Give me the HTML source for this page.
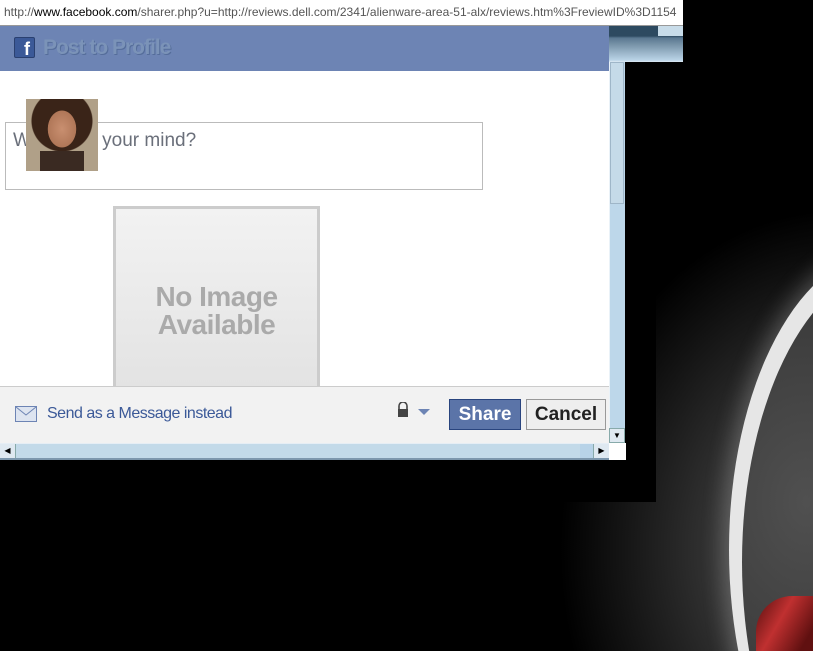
<!DOCTYPE html>
<html style="width:813px;height:651px;overflow:hidden"><head><style>
*{margin:0;padding:0;box-sizing:border-box}
body{width:813px;height:651px;background:#000;position:relative;overflow:hidden;font-family:"Liberation Sans",sans-serif}
.abs{position:absolute}
#art{position:absolute;left:0;top:0;width:813px;height:651px;overflow:hidden}
</style></head><body>
<div id="art">
<div class="abs" style="left:500px;top:150px;width:313px;height:501px;background:radial-gradient(ellipse 280px 340px at 340px 400px,#505050 0%,#383838 40%,#1a1a1a 72%,#000 100%)"></div>
<div class="abs" style="left:729px;top:250px;width:320px;height:600px;border-radius:50%;background:#e6e6e6;box-shadow:0 0 22px 6px rgba(210,210,210,.3)"></div>
<div class="abs" style="left:742px;top:262px;width:320px;height:600px;border-radius:50%;background:radial-gradient(ellipse at 20% 40%,#505050,#2a2a2a 70%)"></div>
<div class="abs" style="left:756px;top:596px;width:60px;height:60px;border-radius:60% 0 0 0;background:linear-gradient(120deg,#ddd 0 8%,#7a1a1a 14%,#c03030 40%,#601010 80%)"></div>
</div>
<div class="abs" style="left:0;top:0;width:656px;height:502px;background:#000"></div>
<div class="abs" style="left:0;top:0;width:683px;height:26px;background:#fff;border-bottom:1px solid #999;font-size:12px;line-height:25px;color:#555;padding-left:4px;white-space:nowrap;overflow:hidden">http://<span style="color:#000">www.facebook.com</span>/sharer.php?u=http://reviews.dell.com/2341/alienware-area-51-alx/reviews.htm%3FreviewID%3D1154</div>
<div class="abs" style="left:609px;top:26px;width:74px;height:36px;background:linear-gradient(#2d4a60 0 10px,#5a7890 12px,#7e99ae 20px,#b9d3e6 34px,#ddeaf4 36px)"></div>
<div class="abs" style="left:658px;top:26px;width:25px;height:10px;background:#c8dce9"></div>
<div class="abs" style="left:609px;top:62px;width:16px;height:381px;background:#bdd7ea;border-left:1px solid #eaf2f8"></div>
<div class="abs" style="left:610px;top:62px;width:14px;height:142px;background:#c5dae8;border:1px solid #9fb6c8"></div>
<div class="abs" style="left:609px;top:428px;width:16px;height:15px;background:#dfe9f1;border:1px solid #8aa;font-size:8px;text-align:center;line-height:13px">▼</div>
<div class="abs" style="left:0;top:26px;width:609px;height:45px;background:#6d84b4"></div>
<div class="abs" style="left:14px;top:37px;width:21px;height:21px;background:#3b5998;border:1px solid #2a4070;border-radius:2px;color:#fff;font-weight:bold;font-size:18px;line-height:22px;text-align:right;padding-right:4px">f</div>
<div class="abs" style="left:43px;top:36px;font-size:21px;font-weight:bold;color:#7b93b8;text-shadow:1px 1px 0 #556d9a;letter-spacing:-1px">Post to Profile</div>
<div class="abs" style="left:0;top:71px;width:609px;height:315px;background:#fff"></div>
<div class="abs" style="left:5px;top:122px;width:478px;height:68px;border:1px solid #bbb;background:#fff;font-size:19px;color:#6a6f7a;padding:7px 7px">What's on your mind?</div>
<div class="abs" style="left:26px;top:99px;width:72px;height:72px;background:radial-gradient(ellipse 20px 26px at 36px 30px,#c98f70 0%,#b07758 70%,transparent 72%),linear-gradient(#3a2a22,#3a2a22) 14px 52px/44px 20px no-repeat,radial-gradient(circle at 36px 22px,#3a2418 0 30px,transparent 31px),#b0a088"></div>
<div class="abs" style="left:113px;top:206px;width:207px;height:180px;border:3px solid #ccc;border-bottom:none;background:linear-gradient(#f2f2f2,#e3e3e3);text-align:center;font-weight:bold;font-size:28px;line-height:28px;color:#aaa;padding-top:74px;letter-spacing:-0.5px">No Image<br>Available</div>
<div class="abs" style="left:0;top:386px;width:609px;height:57px;background:#f2f2f2;border-top:1px solid #ccc"></div>
<svg class="abs" style="left:15px;top:406px" width="22" height="16"><rect x="0.5" y="0.5" width="21" height="15" fill="#dde4f0" stroke="#6d84b4"/><path d="M1 1 L11 9 L21 1" fill="none" stroke="#6d84b4"/></svg>
<div class="abs" style="left:47px;top:405px;font-size:16px;color:#3b5998;letter-spacing:-0.5px">Send as a Message instead</div>
<svg class="abs" style="left:397px;top:402px" width="36" height="16"><path d="M2 7 V4 a4 4 0 0 1 8 0 V7" fill="none" stroke="#444" stroke-width="1.6"/><rect x="1" y="7" width="10" height="8" fill="#444"/><path d="M21 7 H33 L27 13Z" fill="#6d84b4"/></svg>
<div class="abs" style="left:449px;top:399px;width:72px;height:31px;background:#5b74a8;border:1px solid #29447e;color:#fff;font-weight:bold;font-size:19px;text-align:center;line-height:29px">Share</div>
<div class="abs" style="left:526px;top:399px;width:80px;height:31px;background:#eee;border:1px solid #999;color:#222;font-weight:bold;font-size:19px;text-align:center;line-height:29px">Cancel</div>
<div class="abs" style="left:0;top:443px;width:609px;height:17px;background:#c3dae9;border-top:1px solid #e6eef5;border-bottom:2px solid #7d97ad"></div>
<div class="abs" style="left:0;top:444px;width:16px;height:14px;background:#dfe9f1;border-right:1px solid #8aa;font-size:8px;line-height:14px;text-align:center">◀</div>
<div class="abs" style="left:580px;top:444px;width:14px;height:14px;background:#b8d3e8"></div>
<div class="abs" style="left:593px;top:444px;width:16px;height:14px;background:#dfe9f1;border-left:1px solid #8aa;font-size:8px;line-height:14px;text-align:center">▶</div>
<div class="abs" style="left:609px;top:443px;width:17px;height:17px;background:#fff"></div>
</body></html>
